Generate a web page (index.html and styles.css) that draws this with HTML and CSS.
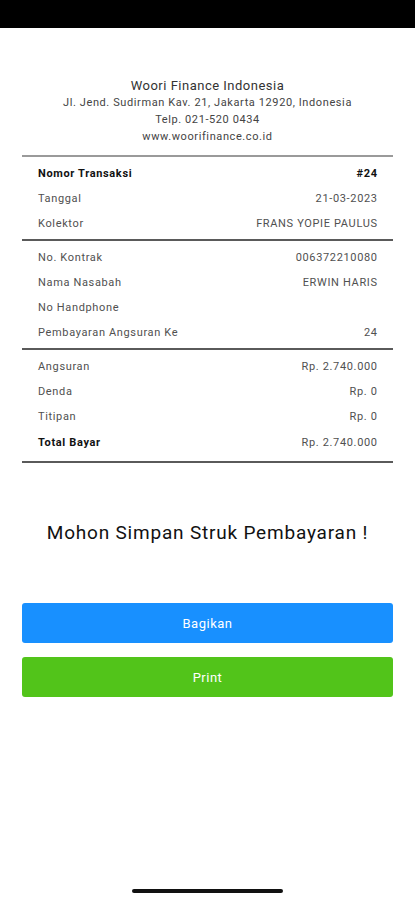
FILE: index.html
```html
<!DOCTYPE html>
<html lang="id">
<head>
<meta charset="utf-8">
<title>Struk Pembayaran</title>
<link rel="stylesheet" href="styles.css">
</head>
<body>
<div class="screen">
  <div class="status-bar"></div>
  <div class="content">
    <header class="company">
      <div class="company-name">Woori Finance Indonesia</div>
      <div class="company-line">Jl. Jend. Sudirman Kav. 21, Jakarta 12920, Indonesia</div>
      <div class="company-line">Telp. 021-520 0434</div>
      <div class="company-line">www.woorifinance.co.id</div>
    </header>
    <div class="divider divider-light"></div>
    <section class="section section-first">
      <div class="row bold"><span>Nomor Transaksi</span><span>#24</span></div>
      <div class="row"><span>Tanggal</span><span>21-03-2023</span></div>
      <div class="row"><span>Kolektor</span><span>FRANS YOPIE PAULUS</span></div>
    </section>
    <div class="divider"></div>
    <section class="section section-mid">
      <div class="row"><span>No. Kontrak</span><span>006372210080</span></div>
      <div class="row"><span>Nama Nasabah</span><span>ERWIN HARIS</span></div>
      <div class="row"><span>No Handphone</span><span></span></div>
      <div class="row"><span>Pembayaran Angsuran Ke</span><span>24</span></div>
    </section>
    <div class="divider"></div>
    <section class="section section-last">
      <div class="row"><span>Angsuran</span><span>Rp. 2.740.000</span></div>
      <div class="row"><span>Denda</span><span>Rp. 0</span></div>
      <div class="row"><span>Titipan</span><span>Rp. 0</span></div>
      <div class="row total"><span class="total-label">Total Bayar</span><span>Rp. 2.740.000</span></div>
    </section>
    <div class="divider"></div>
    <p class="message">Mohon Simpan Struk Pembayaran !</p>
    <div class="actions">
      <button class="btn btn-blue">Bagikan</button>
      <button class="btn btn-green">Print</button>
    </div>
  </div>
  <div class="home-indicator"></div>
</div>
</body>
</html>
```

FILE: styles.css
```css
* { box-sizing: border-box; }
html, body {
  margin: 0;
  padding: 0;
  background: #ffffff;
}
body {
  font-family: Roboto, "Noto Sans", "Liberation Sans", sans-serif;
  color: #333;
}
.screen {
  width: 415px;
  height: 900px;
  display: flex;
  flex-direction: column;
  position: relative;
  overflow: hidden;
}
.status-bar {
  height: 28px;
  background: #000;
  flex: none;
}
.content {
  padding: 0 22px;
  flex: 1;
}
.company {
  margin-top: 49px;
  text-align: center;
  line-height: 17px;
}
.company-name {
  font-size: 13px;
  letter-spacing: 0.5px;
  color: #333;
}
.company-line {
  font-size: 11px;
  letter-spacing: 0.6px;
  color: #444;
}
.divider {
  height: 2px;
  background: #5a5a5a;
}
.divider-light {
  margin-top: 10px;
  background: #9a9a9a;
}
.section {
  padding: 4px 16px 4px;
}
.section-first {
  padding-bottom: 3px;
}
.section-mid {
  padding-bottom: 3px;
}
.section-last {
  padding-bottom: 6px;
}
.row {
  height: 25px;
  display: flex;
  justify-content: space-between;
  align-items: center;
  font-size: 11px;
  letter-spacing: 0.65px;
  color: #505050;
}
.row > span:last-child {
  margin-right: -0.65px;
}
.row.bold {
  font-weight: 700;
  color: #111;
}
.row.total {
  height: 26px;
}
.total-label {
  font-weight: 700;
  color: #111;
}
.message {
  margin: 58px 0 0;
  text-align: center;
  font-size: 19px;
  letter-spacing: 0.8px;
  line-height: 24px;
  color: #111;
}
.actions {
  margin-top: 58px;
  display: flex;
  flex-direction: column;
  gap: 14px;
}
.btn {
  height: 40px;
  border: none;
  border-radius: 3px;
  color: #fff;
  font-family: Roboto, "Noto Sans", "Liberation Sans", sans-serif;
  font-size: 13px;
  letter-spacing: 0.5px;
  width: 100%;
}
.btn-blue { background: #1890ff; }
.btn-green { background: #52c41a; }
.home-indicator {
  position: absolute;
  left: 132px;
  top: 889px;
  width: 151px;
  height: 4px;
  border-radius: 2px;
  background: #111;
}
```
